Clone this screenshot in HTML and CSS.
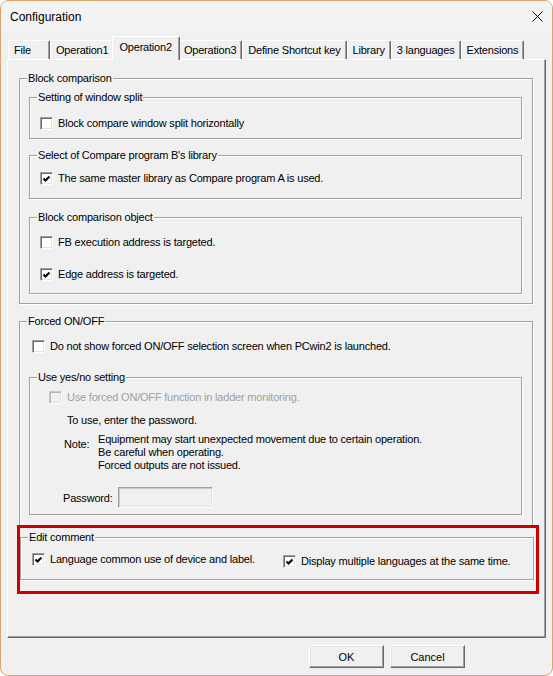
FILE: index.html
```html
<!DOCTYPE html>
<html lang="en">
<head>
<meta charset="utf-8">
<title>Configuration</title>
<link rel="stylesheet" href="styles.css">
</head>
<body>
<div class="window">
  <div class="titlebar">
    <span class="title">Configuration</span>
    <svg class="close" width="11" height="11" viewBox="0 0 11 11"><path d="M0.5 0.5L10.5 10.5M10.5 0.5L0.5 10.5" stroke="#000" stroke-width="1"/></svg>
  </div>
  <div class="client">
    <div class="tabs">
      <div class="tab tab-min">File</div>
      <div class="tab">Operation1</div>
      <div class="tab selected">Operation2</div>
      <div class="tab">Operation3</div>
      <div class="tab">Define Shortcut key</div>
      <div class="tab">Library</div>
      <div class="tab">3 languages</div>
      <div class="tab">Extensions</div>
    </div>
    <div class="panel">
      <div class="group g-block">
        <div class="legend">Block comparison</div>
        <div class="group inner g-split">
          <div class="legend">Setting of window split</div>
          <div class="check row-split"><span class="box"></span><span>Block compare window split horizontally</span></div>
        </div>
        <div class="group inner g-select">
          <div class="legend">Select of Compare program B's library</div>
          <div class="check row-select"><span class="box"><svg viewBox="0 0 9 9" width="9" height="9"><path d="M1.5 4.5L3.5 6.5L7.5 2.5" fill="none" stroke="#000" stroke-width="2.1"/></svg></span><span>The same master library as Compare program A is used.</span></div>
        </div>
        <div class="group inner g-object">
          <div class="legend">Block comparison object</div>
          <div class="check row-obj1"><span class="box"></span><span>FB execution address is targeted.</span></div>
          <div class="check row-obj2"><span class="box"><svg viewBox="0 0 9 9" width="9" height="9"><path d="M1.5 4.5L3.5 6.5L7.5 2.5" fill="none" stroke="#000" stroke-width="2.1"/></svg></span><span>Edge address is targeted.</span></div>
        </div>
      </div>

      <div class="group g-forced">
        <div class="legend">Forced ON/OFF</div>
        <div class="check row-forced"><span class="box"></span><span>Do not show forced ON/OFF selection screen when PCwin2 is launched.</span></div>
        <div class="group inner g-use">
          <div class="legend">Use yes/no setting</div>
          <div class="check disabled row-use"><span class="box"></span><span>Use forced ON/OFF function in ladder monitoring.</span></div>
          <div class="info">To use, enter the password.</div>
          <div class="note">
            <span class="note-label">Note:</span>
            <div class="note-text">
              <div>Equipment may start unexpected movement due to certain operation.</div>
              <div>Be careful when operating.</div>
              <div>Forced outputs are not issued.</div>
            </div>
          </div>
          <div class="password">
            <span class="pw-label">Password:</span>
            <span class="pw-input"></span>
          </div>
        </div>
      </div>

      <div class="group g-edit">
        <div class="legend">Edit comment</div>
        <div class="edit-row">
          <div class="check edit-first"><span class="box"><svg viewBox="0 0 9 9" width="9" height="9"><path d="M1.5 4.5L3.5 6.5L7.5 2.5" fill="none" stroke="#000" stroke-width="2.1"/></svg></span><span>Language common use of device and label.</span></div>
          <div class="check edit-second"><span class="box"><svg viewBox="0 0 9 9" width="9" height="9"><path d="M1.5 4.5L3.5 6.5L7.5 2.5" fill="none" stroke="#000" stroke-width="2.1"/></svg></span><span>Display multiple languages at the same time.</span></div>
        </div>
      </div>
    </div>
    <div class="buttons">
      <button class="btn">OK</button>
      <button class="btn">Cancel</button>
    </div>
  </div>
  <div class="highlight"></div>
</div>
</body>
</html>
```
FILE: styles.css
```css
* { box-sizing: border-box; }
html, body { margin: 0; padding: 0; background: #ffffff; }
body {
  font-family: "Liberation Sans", Arial, sans-serif;
  font-size: 11px;
  letter-spacing: -0.2px;
  color: #000;
}
.window {
  position: relative;
  width: 553px;
  height: 676px;
  border: 1px solid #d9a673;
  border-radius: 8px;
  background: #f0f0f0;
  overflow: hidden;
}
.titlebar {
  height: 30px;
  background: #f3f3f3;
  display: flex;
  align-items: center;
  justify-content: space-between;
  padding: 0 9px 0 9px;
}
.title {
  font-size: 12px;
  letter-spacing: 0;
  line-height: 14px;
  padding-top: 1px;
}
.close { display: block; margin-top: 1px; }
.client {
  padding: 0 6px;
}
.tabs {
  display: flex;
  align-items: flex-end;
  margin-top: 5px;
  padding-left: 1px;
  height: 23px;
}
.tab {
  height: 19px;
  display: flex;
  align-items: center;
  padding: 0 5px;
  border-top: 1px solid #fff;
  border-left: 1px solid #fff;
  border-right: 1px solid #696969;
  box-shadow: inset -1px 0 0 #a0a0a0;
  border-radius: 2px 2px 0 0;
  white-space: nowrap;
  background: #f0f0f0;
}
.tab-min { min-width: 42px; }
.tab.selected {
  position: relative;
  z-index: 2;
  height: 24px;
  margin: 0 -2px -1px -2px;
  padding: 0 7px 3px 6px;
}
.panel {
  height: 579px;
  border-top: 1px solid #fff;
  border-left: 1px solid #fff;
  border-right: 1px solid #696969;
  border-bottom: 1px solid #696969;
  box-shadow: inset -1px -1px 0 #a0a0a0;
  padding: 18px 12px 0 11px;
}
.group {
  border: 1px solid #a0a0a0;
  box-shadow: 1px 1px 0 #fff, inset 1px 1px 0 #fff;
}
.legend {
  width: max-content;
  height: 13px;
  line-height: 13px;
  margin: -7px 0 0 7px;
  padding: 0 1px;
  background: #f0f0f0;
  white-space: nowrap;
}
.g-block > .legend,
.g-forced > .legend { margin-left: -2px; }
.g-edit > .legend { margin-left: -4px; }

.g-block { padding: 0 10px 9px 9px; }
.g-split { margin-top: 12px; padding-bottom: 8px; }
.g-select { margin-top: 16px; padding-bottom: 13px; }
.g-object { margin-top: 18px; padding-bottom: 12px; }
.row-split { margin: 13px 0 0 10px; }
.row-select { margin: 10px 0 0 10px; }
.row-obj1 { margin: 12px 0 0 10px; }
.row-obj2 { margin: 19px 0 0 10px; }

.check {
  display: flex;
  align-items: center;
  height: 13px;
  line-height: 13px;
  white-space: nowrap;
}
.box {
  flex: 0 0 13px;
  width: 13px;
  height: 13px;
  margin-right: 5px;
  background: #fff;
  border: 1px solid;
  border-color: #a0a0a0 #fff #fff #a0a0a0;
  box-shadow: inset 1px 1px 0 #696969, inset -1px -1px 0 #e3e3e3;
  display: flex;
  align-items: center;
  justify-content: center;
}
.box svg { display: block; }
.check.disabled { color: #a0a0a0; }
.check.disabled .box {
  background: #f0f0f0;
  border-color: #c8c8c8 #fff #fff #c8c8c8;
  box-shadow: inset 1px 1px 0 #b4b4b4, inset -1px -1px 0 #e3e3e3;
}

.g-forced { margin-top: 17px; padding: 0 10px 10px 9px; }
.row-forced { margin: 12px 0 0 3px; }
.g-use { margin-top: 24px; padding-bottom: 6px; }
.row-use { margin: 7px 0 0 19px; }
.info { margin: 10px 0 0 37px; line-height: 13px; height: 13px; }
.note { display: flex; margin: 6px 0 0 34px; line-height: 13px; }
.note-label { flex: 0 0 34px; margin-top: 5px; }
.password { display: flex; align-items: center; margin: 15px 0 0 33px; height: 21px; }
.pw-label { flex: 0 0 55px; }
.pw-input {
  width: 95px;
  height: 21px;
  border: 1px solid;
  border-color: #a0a0a0 #fff #fff #a0a0a0;
  box-shadow: inset 1px 1px 0 #c8c8c8, inset -1px -1px 0 #e3e3e3;
  background: #f0f0f0;
}

.g-edit { margin: 11px -1px 0 1px; padding: 0 10px 11px 11px; }
.edit-row { display: flex; align-items: flex-start; margin-top: 9px; }
.edit-first { flex: 0 0 251px; }
.edit-second { margin-top: 2px; }

.buttons {
  display: flex;
  justify-content: flex-end;
  gap: 6px;
  margin: 7px 81px 0 0;
}
.btn {
  width: 75px;
  height: 23px;
  font: inherit;
  letter-spacing: 0;
  color: #000;
  background: #f0f0f0;
  border: 1px solid;
  border-color: #fff #696969 #696969 #fff;
  box-shadow: inset -1px -1px 0 #a0a0a0, inset 1px 1px 0 #e3e3e3;
  padding: 0;
  border-radius: 0;
}
.highlight {
  position: absolute;
  left: 16px;
  top: 524px;
  width: 522px;
  height: 69px;
  border: 3px solid #cc0000;
  pointer-events: none;
}
```
